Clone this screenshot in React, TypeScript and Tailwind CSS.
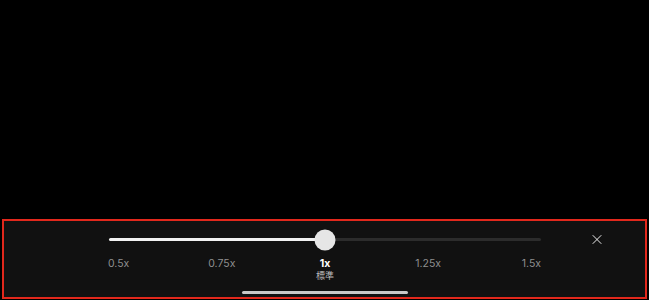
import { X } from "lucide-react";

const speeds = ["0.5x", "0.75x", "1x", "1.25x", "1.5x"];

const SpeedPanel = () => {
  const current = "1x";

  return (
    <div className="mx-[2px] mb-[1px] h-[80px] border-2 border-[#e2281c] bg-[#111111]">
      <div className="flex h-[37px] items-center">
        <div className="relative ml-[105px] h-[3px] w-[432px] rounded-full bg-[#2c2c2c]">
          <div className="h-full w-1/2 rounded-full bg-[#f2f2f2]" />
          <div className="absolute left-1/2 top-1/2 h-[21px] w-[21px] -translate-x-1/2 -translate-y-1/2 rounded-full bg-[#e6e6e6]" />
        </div>
        <button className="ml-[48px] flex h-[16px] w-[16px] items-center justify-center text-[#ededed]">
          <X size={17} strokeWidth={1.5} />
        </button>
      </div>
      <div className="ml-[63px] grid w-[516px] grid-cols-5 text-center font-['Inter','Noto_Sans_CJK_JP',sans-serif]">
        {speeds.map((speed) => (
          <div key={speed} className="flex flex-col items-center">
            {speed === current ? (
              <>
                <span className="text-[10.5px] leading-[12px] font-bold text-white">
                  {speed}
                </span>
                <span className="text-[9px] leading-[12px] text-[#bdbdbd]">
                  標準
                </span>
              </>
            ) : (
              <span className="text-[10.5px] leading-[12px] text-[#8f8f8f]">
                {speed}
              </span>
            )}
          </div>
        ))}
      </div>
      <div className="ml-[238px] mt-[9px] h-[3px] w-[166px] rounded-full bg-[#c8c8c8]" />
    </div>
  );
};

export default function App() {
  return (
    <div className="flex h-[300px] w-[649px] flex-col bg-black">
      <div className="flex-1" />
      <SpeedPanel />
    </div>
  );
}
